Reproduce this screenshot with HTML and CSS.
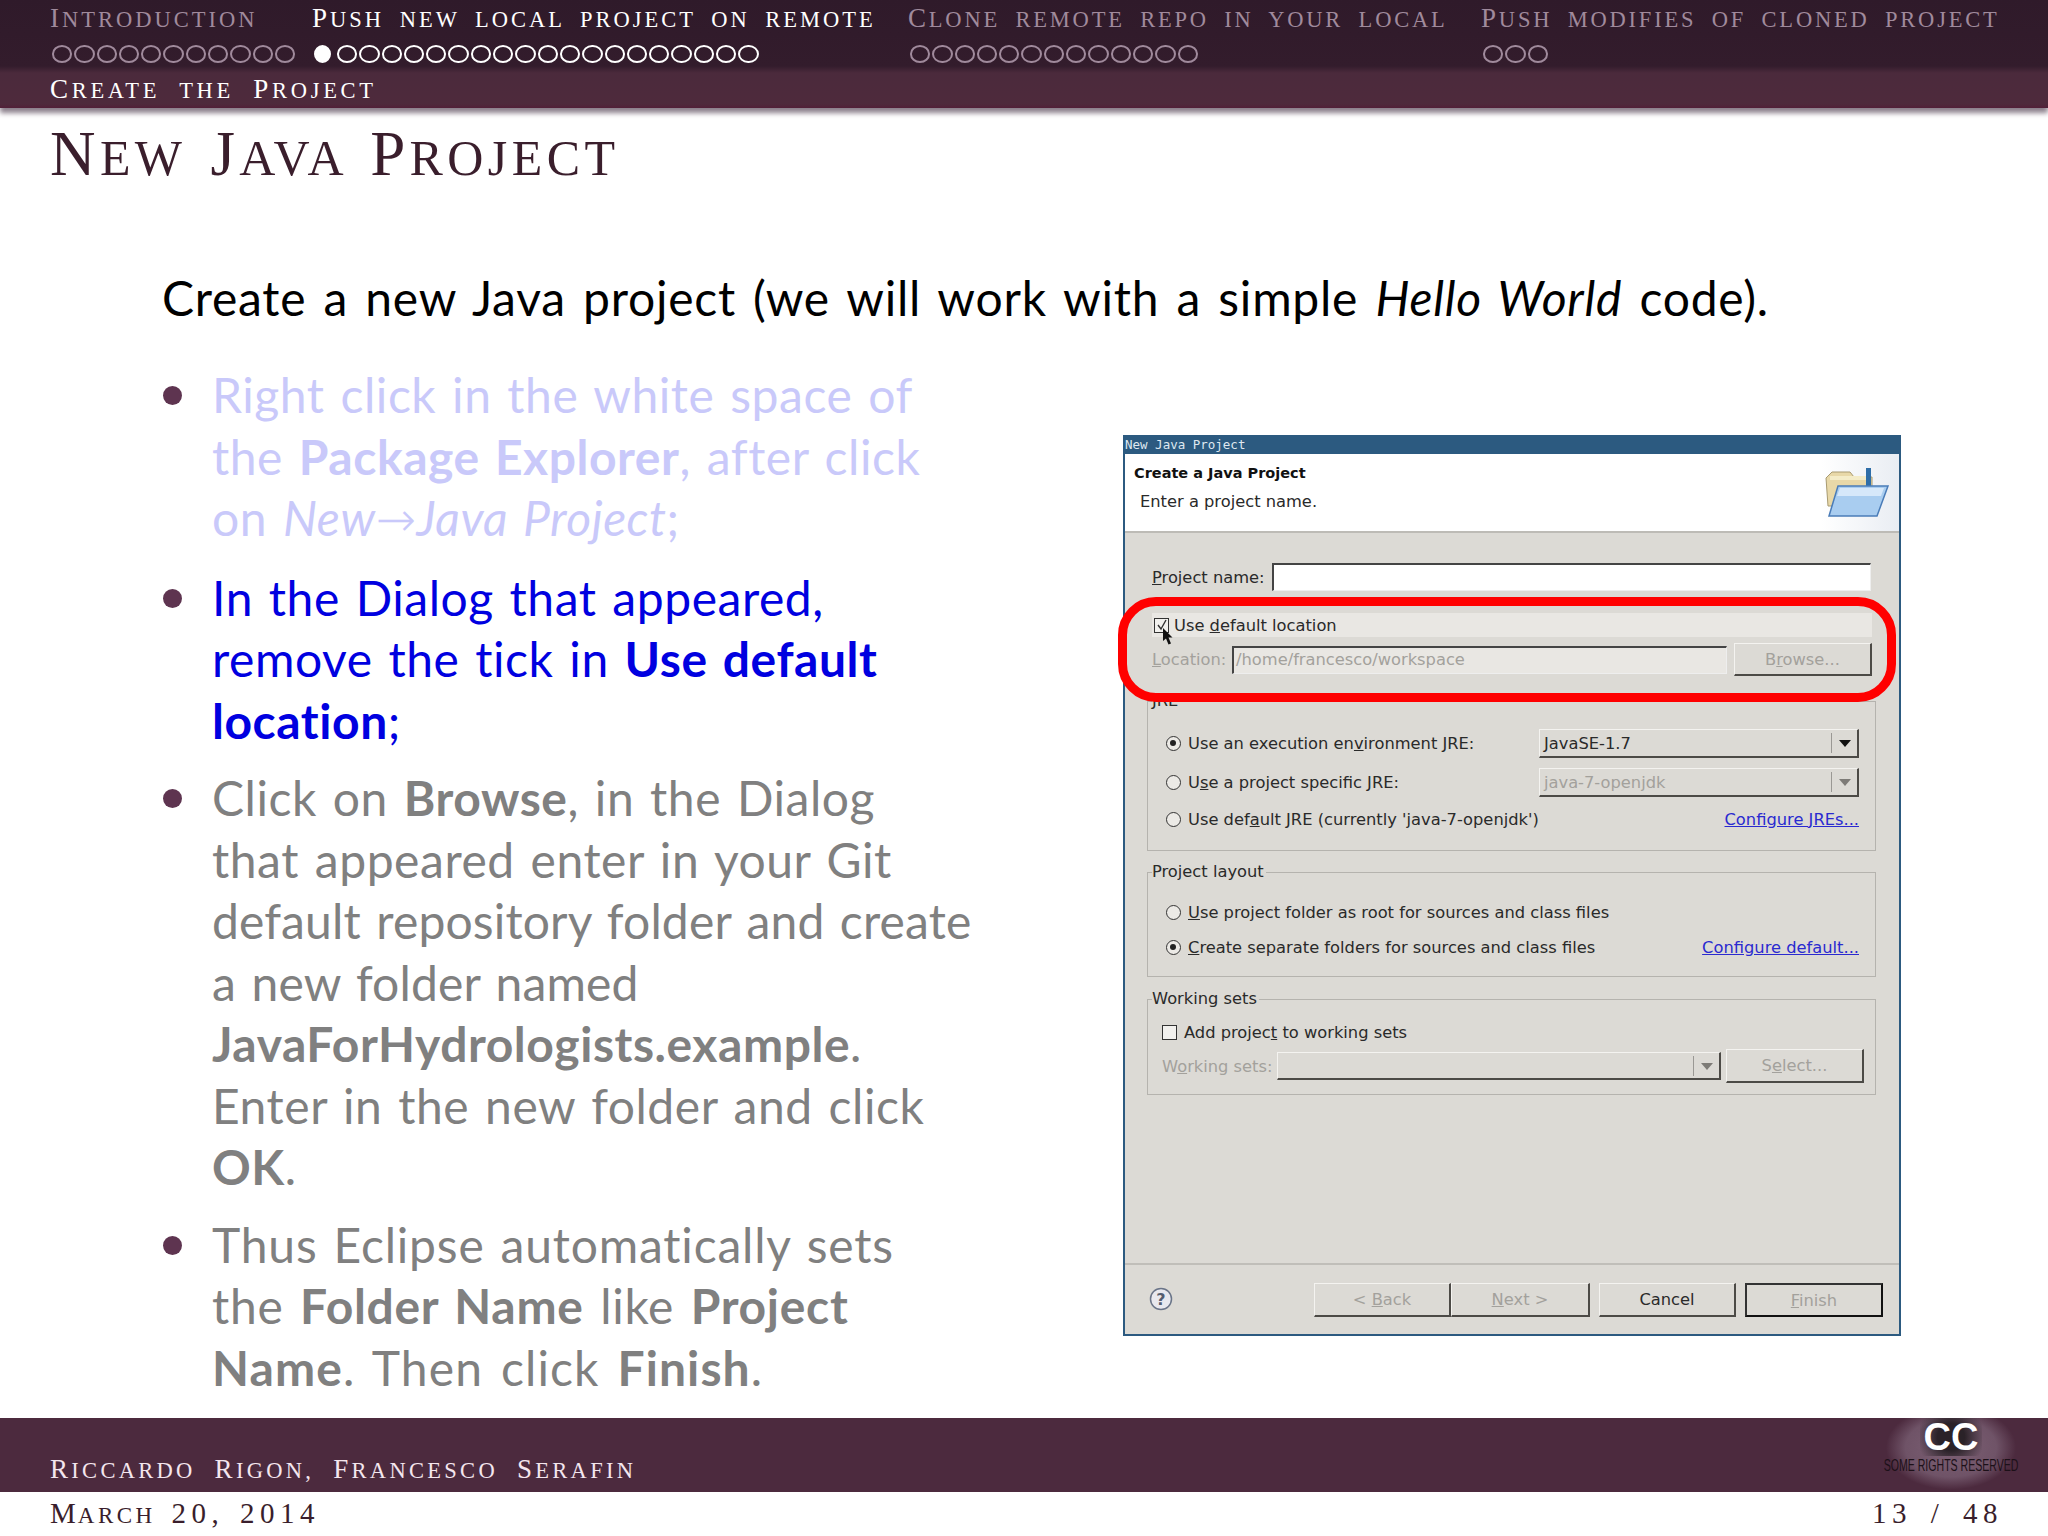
FILE: index.html
```html
<!DOCTYPE html>
<html lang="en">
<head>
<meta charset="utf-8">
<title>New Java Project</title>
<link rel="stylesheet" href="styles.css">
</head>
<body>
<div class="slide">
  <header class="head">
    <nav class="nav">
      <div class="sec sec-1">
        <div class="sec-name sc"><span class="cap">I</span>ntroduction</div>
        <div class="dots"><i></i><i></i><i></i><i></i><i></i><i></i><i></i><i></i><i></i><i></i><i></i></div>
      </div>
      <div class="sec sec-2 sec-on">
        <div class="sec-name sc"><span class="cap">P</span>ush new local project on remote</div>
        <div class="dots"><i class="full"></i><i class="cur"></i><i></i><i></i><i></i><i></i><i></i><i></i><i></i><i></i><i></i><i></i><i></i><i></i><i></i><i></i><i></i><i></i><i></i><i></i></div>
      </div>
      <div class="sec sec-3">
        <div class="sec-name sc sc-narrow"><span class="cap">C</span>lone remote repo in your local</div>
        <div class="dots"><i></i><i></i><i></i><i></i><i></i><i></i><i></i><i></i><i></i><i></i><i></i><i></i><i></i></div>
      </div>
      <div class="sec sec-4">
        <div class="sec-name sc sc-narrow"><span class="cap">P</span>ush modifies of cloned project</div>
        <div class="dots"><i></i><i></i><i></i></div>
      </div>
    </nav>
    <div class="subsec sc"><span class="cap">C</span>reate the <span class="cap">P</span>roject</div>
  </header>

  <h1 class="title"><span class="cap">N</span>ew <span class="cap">J</span>ava <span class="cap">P</span>roject</h1>

  <main class="main">
    <p class="intro">Create a new Java project (we will work with a simple <em>Hello World</em> code).</p>
    <div class="cols">
      <ul class="list">
        <li class="faint">Right click in the white space of<br>the <b>Package Explorer</b>, after click<br>on <em>New<span class="arrow">→</span>Java Project</em>;</li>
        <li class="active">In the Dialog that appeared,<br>remove the tick in <b>Use default</b><br><b>location</b>;</li>
        <li class="dim">Click on <b>Browse</b>, in the Dialog<br>that appeared enter in your Git<br><span class="tight">default repository folder and create</span><br><span class="tight">a new folder named</span><br><b>JavaForHydrologists.example</b>.<br>Enter in the new folder and click<br><b>OK</b>.</li>
        <li class="dim"><span class="loose">Thus Eclipse automatically sets</span><br><span class="snug">the <b>Folder Name</b> like <b>Project</b></span><br><span class="wide"><b>Name</b>. Then click <b>Finish</b>.</span></li>
      </ul>

      <section class="dialog">
        <div class="dlg-title">New Java Project</div>
        <div class="dlg-head">
          <div class="dlg-h1">Create a Java Project</div>
          <div class="dlg-h2">Enter a project name.</div>
          <svg class="dlg-icon" width="68" height="52" viewBox="0 0 68 52">
            <path d="M4 12 L10 6 H28 L32 11 H50 V40 H6 Z" fill="#e8d8a8" stroke="#a89a70"/>
            <path d="M8 10 H48 V14 H8 Z" fill="#f4ecc8"/>
            <path d="M44 2 H49 V26 H36 V21 H44 Z" fill="#2f6ea8"/>
            <path d="M16 20 H66 L55 50 H7 Z" fill="#a9cdf0" stroke="#4a7cb8" stroke-width="1.5"/>
            <path d="M18 22 H62 L59 30 H15 Z" fill="#d6e8fa"/>
          </svg>
        </div>
        <div class="dlg-body">
          <div class="row-name">
            <span class="lbl-name"><u>P</u>roject name:</span>
            <span class="field field-name"></span>
          </div>
          <div class="row-default">
            <span class="check check-on"><svg width="12" height="12" viewBox="0 0 12 12"><path d="M2 6 L5 10 L10 1" fill="none" stroke="#333" stroke-width="1.4"/></svg></span>
            <span>Use <u>d</u>efault location</span>
          </div>
          <div class="row-loc">
            <span class="lbl-loc off"><u>L</u>ocation:</span>
            <span class="field field-loc off">/home/francesco/workspace</span>
            <span class="btn btn-browse off"><span>B<u>r</u>owse...</span></span>
          </div>

          <div class="group group-jre">
            <span class="legend legend-jre">JRE</span>
            <div class="g-row g-row-combo">
              <span class="opt"><span class="radio radio-on"></span><span>Use an execution en<u>v</u>ironment JRE:</span></span>
              <span class="combo"><span class="combo-text">JavaSE-1.7</span><span class="combo-arrow"></span></span>
            </div>
            <div class="g-row g-row-combo">
              <span class="opt"><span class="radio"></span><span>U<u>s</u>e a project specific JRE:</span></span>
              <span class="combo off"><span class="combo-text">java-7-openjdk</span><span class="combo-arrow"></span></span>
            </div>
            <div class="g-row">
              <span class="opt"><span class="radio"></span><span>Use def<u>a</u>ult JRE (currently 'java-7-openjdk')</span></span>
              <span class="link">Configure JREs...</span>
            </div>
          </div>

          <div class="group group-layout">
            <span class="legend">Project layout</span>
            <div class="g-row">
              <span class="opt"><span class="radio"></span><span><u>U</u>se project folder as root for sources and class files</span></span>
            </div>
            <div class="g-row">
              <span class="opt"><span class="radio radio-on"></span><span><u>C</u>reate separate folders for sources and class files</span></span>
              <span class="link">Configure default...</span>
            </div>
          </div>

          <div class="group group-sets">
            <span class="legend">Working sets</span>
            <div class="g-row g-row-check">
              <span class="opt"><span class="check"></span><span>Add projec<u>t</u> to working sets</span></span>
            </div>
            <div class="g-row-sets">
              <span class="lbl-sets off">W<u>o</u>rking sets:</span>
              <span class="combo combo-sets off"><span class="combo-text"></span><span class="combo-arrow"></span></span>
              <span class="btn btn-select off"><span>S<u>e</u>lect...</span></span>
            </div>
          </div>
        </div>
        <div class="dlg-foot">
          <svg class="help" width="24" height="24" viewBox="0 0 24 24"><circle cx="12" cy="12" r="10.5" fill="#e8e8ee" stroke="#6a7488" stroke-width="1.5"/><text x="12" y="17.5" text-anchor="middle" class="help-q">?</text></svg>
          <div class="foot-btns">
            <div class="pair">
              <span class="btn btn-nav off"><span>&lt; <u>B</u>ack</span></span>
              <span class="btn btn-next off"><span><u>N</u>ext &gt;</span></span>
            </div>
            <span class="btn btn-nav">Cancel</span>
            <span class="btn btn-nav btn-default off"><span><u>F</u>inish</span></span>
          </div>
        </div>

        <div class="ring"></div>
        <svg class="cursor" width="11" height="17" viewBox="0 0 11 17"><path d="M1 0 V13 L4 10.5 L6.5 16.5 L9 15.5 L6.5 9.5 H10.5 Z" fill="#111"/></svg>
      </section>
    </div>
  </main>

  <footer class="foot">
    <div class="band">
      <span class="authors sc"><span class="cap">R</span>iccardo <span class="cap">R</span>igon, <span class="cap">F</span>rancesco <span class="cap">S</span>erafin</span>
      <div class="cc">
        <span class="cc-mark">CC</span>
        <span class="cc-text">SOME RIGHTS RESERVED</span>
      </div>
    </div>
    <div class="foot-line">
      <span class="date"><span class="date-cap">M</span><span class="date-sc">arch</span> 20, 2014</span>
      <span class="page">13 / 48</span>
    </div>
  </footer>
</div>
</body>
</html>
```
FILE: styles.css
```css
* { box-sizing: border-box; }
html, body { margin: 0; padding: 0; background: #fff; }
.slide {
  width: 2048px; height: 1536px; display: flex; flex-direction: column;
  overflow: hidden; font-family: "Lato", "DejaVu Sans", sans-serif; background: #fff;
}

/* small caps built from two sizes of capitals */
.sc { text-transform: uppercase; font-family: "Liberation Serif", serif; font-size: 22.5px; letter-spacing: 3px; word-spacing: 7px; white-space: nowrap; }
.sc-narrow { letter-spacing: 2.8px; }
.cap { font-size: 27px; }

/* header */
.head {
  height: 108px; flex: none;
  background: linear-gradient(#2f1a2a 0, #331c2c 66px, #4b2a3c 73px, #4e2a3c 104px, #521f38 108px);
  box-shadow: 0 5px 5px rgba(60, 40, 60, .6);
  position: relative;
}
.nav { height: 70px; padding-left: 50px; display: grid; grid-template-columns: 262px 596px 573px 1fr; }
.sec { color: #a08a9c; }
.sec-on { color: #fff; }
.sec-name { line-height: 27px; height: 36px; padding-top: 5px; }
.dots { display: flex; padding-top: 9px; padding-left: 2px; }
.dots i { width: 20.3px; height: 18px; margin-right: 2px; border: 2px solid currentColor; border-radius: 50%; flex: none; }
.dots i.full { background: #fff; width: 17px; margin-right: 6px; }
.dots i.cur { border-color: #fff; }
.subsec { color: #fff; line-height: 27px; padding: 6px 0 0 50px; letter-spacing: 3.7px; word-spacing: 10px; }

/* title */
.title {
  margin: 0; flex: none; height: 100px; padding: 11px 0 0 50px; color: #3a1e2c; font-family: "Liberation Serif", serif;
  font-weight: 400; font-size: 50px; line-height: 70px; text-transform: uppercase; letter-spacing: 4.4px; word-spacing: 8px;
}
.title .cap { font-size: 63px; }

/* main */
.main { flex: 1; padding-left: 162px; min-height: 0; }
.intro { margin: 0; padding-top: 60px; font-size: 48px; line-height: 60px; color: #000; white-space: nowrap; letter-spacing: .75px; word-spacing: 4.2px; }
.intro em { font-style: italic; }
.cols { display: flex; }
.list { width: 961px; flex: none; margin: 0; padding: 36px 0 0; list-style: none; font-size: 48px; line-height: 61.5px; white-space: nowrap; letter-spacing: .55px; word-spacing: 3px; }
.list li { position: relative; padding-left: 50px; margin-bottom: 16px; }
.list li::before {
  content: ""; position: absolute; left: 1px; top: 22px; width: 19px; height: 19px; border-radius: 50%; background: #5e3450;
}
.faint { color: #c9c9fa; }
.active { color: #0000e0; }
.dim { color: #808080; }
.tight { letter-spacing: .15px; }
.loose { letter-spacing: .8px; }
.snug { letter-spacing: .7px; word-spacing: 3.5px; }
.wide { letter-spacing: 1.1px; word-spacing: 4.5px; }
.list b { font-weight: 700; }
.arrow { font-style: normal; font-family: "DejaVu Sans", sans-serif; font-weight: 200; }

/* dialog */
.dialog {
  position: relative; width: 778px; height: 901px; margin-top: 107px; flex: none; display: flex; flex-direction: column;
  background: #dcdad5; border: 2px solid #2c5a80; border-top: 0; font-family: "DejaVu Sans", sans-serif; font-size: 16.3px; color: #2a2a2a;
}
.dlg-title { height: 19px; margin: 0 -2px; padding-left: 2px; background: #2c5a80; color: #dfe8f0; font-family: "DejaVu Sans Mono", monospace; font-size: 12.5px; line-height: 19px; }
.dlg-head { height: 79px; background: linear-gradient(to right, #fff 90%, #e9edf3); border-bottom: 2px solid #bdbbb6; position: relative; flex: none; }
.dlg-h1 { font-weight: 700; font-size: 14.5px; line-height: 18px; padding: 10px 0 0 9px; color: #111; }
.dlg-h2 { font-size: 16.3px; line-height: 18px; padding: 11px 0 0 15px; }
.dlg-icon { position: absolute; right: 9px; top: 12px; }
.dlg-body { flex: 1; padding: 30px 0 0 22px; min-height: 0; }
.off { color: #a3a19c; }
.row-name { display: flex; align-items: center; height: 28px; padding-left: 5px; }
.lbl-name { width: 120px; }
.field { display: block; height: 28px; border: 2px solid; border-color: #444 #eee #eee #444; border-bottom-width: 1px; border-right-width: 1px; }
.field-name { width: 599px; background: #fff; }
.row-default { display: flex; align-items: center; gap: 5px; height: 24px; width: 720px; margin: 22px 0 0 5px; background: #e9e7e3; padding-left: 2px; }
.check { display: inline-flex; width: 15px; height: 15px; border: 1.5px solid #333; background: #f2f1ee; flex: none; align-items: center; justify-content: center; }
.row-loc { display: flex; align-items: center; height: 33px; margin: 6px 0 0 5px; }
.lbl-loc { width: 80px; }
.field-loc { width: 495px; height: 28px; background: #e9e7e3; line-height: 24px; padding-left: 2px; margin-right: 7px; }
.btn { display: flex; align-items: center; justify-content: center; background: #dcdad5; border: 2px solid; border-color: #f4f3f0 #4c4a46 #4c4a46 #f4f3f0; border-top-width: 1px; border-left-width: 1px; flex: none; }
.btn-browse { width: 138px; height: 33px; }

.group { position: relative; border: 1px solid #b5b3ae; }
.legend { position: absolute; left: 4px; top: -11px; line-height: 20px; padding-right: 2px; background: #dcdad5; }
.group-jre { width: 729px; height: 150px; margin-top: 25px; padding: 27px 16px 0 18px; }
.group-layout { width: 729px; height: 105px; margin-top: 21px; padding: 27px 16px 0 18px; }
.group-sets { width: 729px; height: 96px; margin-top: 22px; padding: 22px 11px 0 14px; }
.g-row { display: flex; align-items: center; justify-content: space-between; height: 24px; margin-bottom: 11px; }
.g-row-combo { height: 29px; margin-bottom: 10px; }
.g-row-check { height: 20px; margin-bottom: 7px; }
.opt { display: flex; align-items: center; gap: 7px; white-space: nowrap; }
.radio { width: 15px; height: 15px; border-radius: 50%; border: 1.5px solid #333; background: #eceae6; flex: none; position: relative; }
.radio-on::after { content: ""; position: absolute; left: 3px; top: 3px; width: 6px; height: 6px; border-radius: 50%; background: #222; }
.combo { display: flex; align-items: center; width: 320px; height: 29px; margin-left: auto; border: 2px solid; border-color: #f4f3f0 #4c4a46 #4c4a46 #f4f3f0; border-top-width: 1px; border-left-width: 1px; }
.combo-text { flex: 1; padding-left: 4px; }
.combo-arrow { width: 26px; height: 20px; border-left: 1px solid #9a9894; position: relative; }
.combo-arrow::after { content: ""; position: absolute; left: 7px; top: 7px; border: 6px solid transparent; border-top: 7px solid #111; border-bottom: 0; }
.combo.off .combo-arrow::after { border-top-color: #7d7b77; }
.link { color: #2a2ad0; text-decoration: underline; }
.g-row-sets { display: flex; align-items: center; height: 34px; }
.lbl-sets { width: 115px; }
.combo-sets { width: 445px; height: 28px; margin-left: 0; margin-right: 5px; }
.btn-select { width: 138px; height: 34px; }

.dlg-foot { height: 71px; flex: none; border-top: 2px solid #c0beb9; padding: 18px 16px 0 24px; display: flex; justify-content: space-between; }
.help { margin-top: 4px; }
.help-q { font: 700 16px "DejaVu Sans", sans-serif; fill: #555d70; }
.foot-btns { display: flex; gap: 9px; }
.pair { display: flex; }
.btn-nav { width: 137px; height: 34px; }
.btn-next { width: 139px; height: 34px; }
.btn-default { width: 138px; border: 2px solid #222; border-color: #333 #111 #111 #333; }

.ring { position: absolute; left: -7px; top: 162px; width: 778px; height: 105px; border: 9.5px solid #f00; border-radius: 38px; }
.cursor { position: absolute; left: 37px; top: 193px; }

/* footer */
.foot { flex: none; }
.band { height: 74px; background: #4c2a3e; display: flex; justify-content: space-between; align-items: flex-end; padding-left: 50px; position: relative; }
.authors { color: #f4e6ee; line-height: 27px; padding-bottom: 8px; letter-spacing: 3.3px; word-spacing: 10px; }
.cc {
  width: 134px; height: 74px; margin-right: 30px; display: flex; flex-direction: column; align-items: center;
  background: radial-gradient(ellipse 65px 42px at 50% 40%, #7d6175 0, #6f5367 70%, #4c2a3e 100%);
}
.cc-mark { font: 700 38px/38px "Liberation Sans", sans-serif; color: #fff; height: 38px; background: radial-gradient(circle 34px at 50% 50%, #2a2228 0, #2a2228 40%, transparent 100%); padding: 0 4px; }
.cc-text { font: 400 16px/16px "Liberation Sans", sans-serif; color: #1c1018; margin-top: 2px; white-space: nowrap; transform: scaleX(.66); }
.foot-line {
  height: 44px; display: flex; justify-content: space-between; align-items: center; padding: 0 45px 2px 50px; color: #3a1e2c;
  font-family: "Liberation Serif", serif; font-size: 29px; letter-spacing: 5.5px;
}
.date { white-space: nowrap; word-spacing: 3px; }
.date-cap { letter-spacing: 2px; }
.date-sc { font-size: 23px; text-transform: uppercase; letter-spacing: 3.5px; }
.page { word-spacing: 6px; }
```
